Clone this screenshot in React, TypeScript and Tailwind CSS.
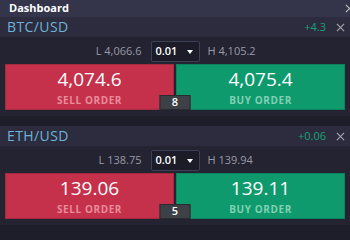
import React from 'react';

interface Pair {
  symbol: string;
  change: string;
  low: string;
  high: string;
  qty: string;
  sell: string;
  buy: string;
  spread: string;
}

const pairs: Pair[] = [
  { symbol: 'BTC/USD', change: '+4.3', low: '4,066.6', high: '4,105.2', qty: '0.01', sell: '4,074.6', buy: '4,075.4', spread: '8' },
  { symbol: 'ETH/USD', change: '+0.06', low: '138.75', high: '139.94', qty: '0.01', sell: '139.06', buy: '139.11', spread: '5' },
];

function CloseIcon({ className }: { className?: string }) {
  return (
    <svg viewBox="0 0 10 10" className={className} fill="none" stroke="currentColor" strokeWidth="1.3">
      <path d="M1 1 L9 9 M9 1 L1 9" />
    </svg>
  );
}

function PairCard({ pair }: { pair: Pair }) {
  return (
    <div>
      <div className="h-[20px] flex items-center justify-between pl-[7px] pr-[5px] bg-[#2c2c3e]">
        <span className="text-[14px] leading-none font-medium text-[#6db3d8] tracking-[0.4px]">{pair.symbol}</span>
        <div className="flex items-center gap-[10px]">
          <span className="text-[11px] text-[#19a078]">{pair.change}</span>
          <CloseIcon className="w-[9px] h-[9px] text-[#a3a3ad]" />
        </div>
      </div>
      <div className="bg-[#232331] pb-[6px]">
        <div className="h-[27px] grid grid-cols-[1fr_auto_1fr] items-center pt-[2px]">
          <span className="text-right pr-[9px] text-[11px] text-[#9a9aa6]">L {pair.low}</span>
          <div className="w-[49px] h-[21px] flex items-center justify-between pl-[4px] pr-[6px] bg-[#1c1c28] border border-[#3a4055] rounded-[2px]">
            <span className="text-[11px] font-semibold text-white">{pair.qty}</span>
            <svg viewBox="0 0 6 4" className="w-[6px] h-[4px] text-white" fill="currentColor">
              <path d="M0 0 L6 0 L3 4 Z" />
            </svg>
          </div>
          <span className="pl-[8px] text-[11px] text-[#9a9aa6]">H {pair.high}</span>
        </div>
        <div className="relative flex gap-[2px] mx-[5px] h-[46px]">
          <div className="flex-1 flex flex-col items-center justify-center gap-[3px] bg-[#c5304a] border border-[#a52a3f]">
            <span className="text-[19px] leading-[24px] font-medium text-white">{pair.sell}</span>
            <span className="text-[10px] font-bold tracking-[0.6px] text-[#e88c9a] leading-[13px]">SELL ORDER</span>
          </div>
          <div className="flex-1 flex flex-col items-center justify-center gap-[3px] bg-[#0e9a6d] border border-[#0b845d]">
            <span className="text-[19px] leading-[24px] font-medium text-white">{pair.buy}</span>
            <span className="text-[10px] font-bold tracking-[0.6px] text-[#80d0b3] leading-[13px]">BUY ORDER</span>
          </div>
          <div className="absolute left-1/2 -translate-x-1/2 bottom-0 w-[31px] h-[15px] flex items-center justify-center bg-[#3d4046] border border-[#2a2b30] text-[11px] font-semibold text-white">
            {pair.spread}
          </div>
        </div>
      </div>
    </div>
  );
}

export default function App() {
  return (
    <div className="w-[350px] h-[240px] overflow-hidden bg-[#1e1e2a] font-['Open_Sans',sans-serif]">
      <div className="h-[17px] flex items-center justify-between pl-[9px] bg-[#34344a]">
        <span className="text-[11px] font-bold text-white">Dashboard</span>
        <CloseIcon className="w-[9px] h-[9px] text-[#c0c0c8] -mr-[4px]" />
      </div>
      <div className="flex flex-col gap-[10px]">
        {pairs.map((p) => (
          <PairCard key={p.symbol} pair={p} />
        ))}
      </div>
    </div>
  );
}
